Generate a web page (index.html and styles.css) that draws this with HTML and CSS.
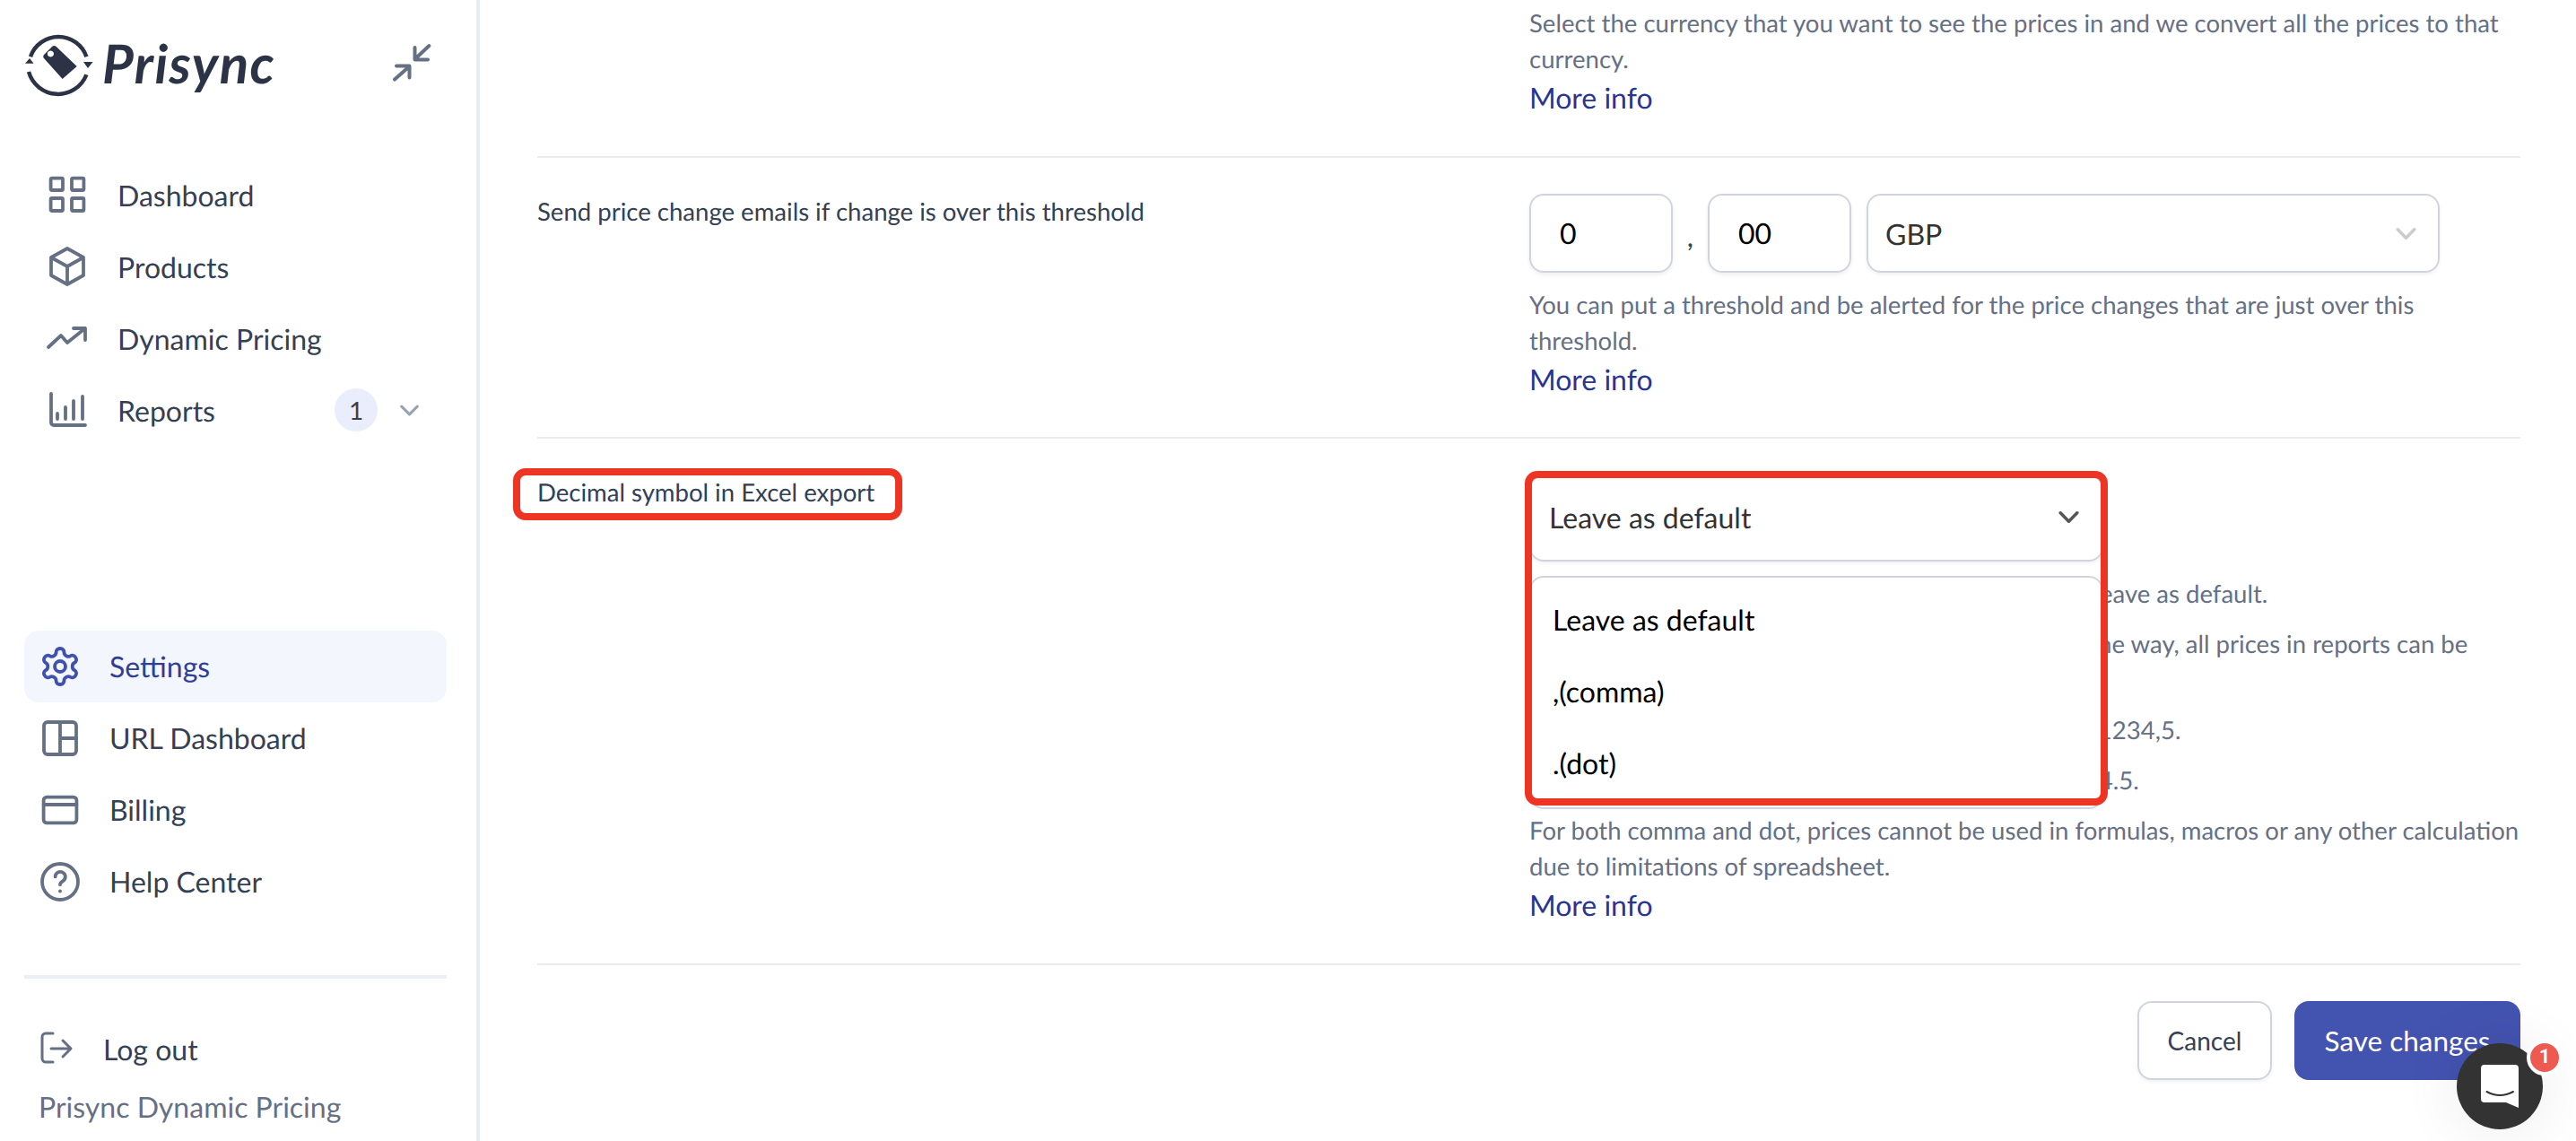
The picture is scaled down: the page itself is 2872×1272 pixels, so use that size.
FILE: index.html
```html
<!DOCTYPE html>
<html lang="en">
<head>
<meta charset="utf-8">
<title>Prisync Settings</title>
<link rel="stylesheet" href="styles.css">
</head>
<body>
<div class="app">
  <aside class="sidebar">
    <div class="brand">
      <svg class="logo-mark" width="80" height="80" viewBox="0 0 80 80">
        <path class="logo-ring" d="M9 33.3A33 33 0 0 1 71.4 33.3"/>
        <path class="logo-ring" d="M71.4 53.3A34 34 0 0 1 7 50"/>
        <path class="logo-solid" d="M68 39H78.5L73 46ZM3 40.7H12.5L8 35Z"/>
        <path class="logo-solid" fill-rule="evenodd" d="M37.5 21.7 60.7 44 44.6 58 24 35c-1-1-1-2.500 0-4l9-9c1-1 3-1.300 4.500-.3ZM31.400 26.400a3.600 3.600 0 1 0 .01 0Z"/>
      </svg>
      <span class="brand-name">Prisync</span>
      <svg class="icon collapse" viewBox="0 0 24 24"><path d="M21.700 2.500 13.750 10M13.750 3.500V10.200H21M2.500 21.300 10.750 14M3.500 13.750H10.750V20.200"/></svg>
    </div>
    <nav class="nav nav-top">
      <a class="nav-item"><svg class="icon" viewBox="0 0 24 24"><rect x="2.800" y="2.800" width="6.700" height="6.700" rx=".6"/><rect x="14.500" y="2.800" width="6.700" height="6.700" rx=".6"/><rect x="2.800" y="14" width="6.700" height="7" rx=".6"/><rect x="14.500" y="14" width="6.700" height="7" rx=".6"/></svg><span>Dashboard</span></a>
      <a class="nav-item"><svg class="icon" viewBox="0 0 24 24"><path d="M12 2 21 7V17L12 22 3 17V7ZM3 7 12 12 21 7M12 12V22"/></svg><span>Products</span></a>
      <a class="nav-item"><svg class="icon" viewBox="0 0 24 24"><path d="M1.500 17 8.500 10.500 12 14.500 22 6.500M15.500 6.500H22V13"/></svg><span>Dynamic Pricing</span></a>
      <a class="nav-item"><svg class="icon" viewBox="0 0 24 24"><path d="M3 3V19a1.500 1.500 0 0 0 1.500 1.500H22M6.500 17V14M11 17V10.500M15.500 17V7M20.500 17V4.500"/></svg><span>Reports</span><b class="count">1</b><svg class="nav-chevron" viewBox="0 0 24 14"><path d="M2 2 12 12 22 2"/></svg></a>
    </nav>
    <nav class="nav nav-bottom">
      <a class="nav-item is-active"><svg class="icon" viewBox="0 0 24 24"><path d="M12.220 2h-.44a2 2 0 0 0-2 2v.18a2 2 0 0 1-1 1.730l-.43.25a2 2 0 0 1-2 0l-.15-.08a2 2 0 0 0-2.730.73l-.22.38a2 2 0 0 0 .73 2.730l.15.1a2 2 0 0 1 1 1.720v.51a2 2 0 0 1-1 1.740l-.15.09a2 2 0 0 0-.73 2.730l.22.38a2 2 0 0 0 2.730.73l.15-.08a2 2 0 0 1 2 0l.43.25a2 2 0 0 1 1 1.730V20a2 2 0 0 0 2 2h.44a2 2 0 0 0 2-2v-.18a2 2 0 0 1 1-1.730l.43-.25a2 2 0 0 1 2 0l.15.08a2 2 0 0 0 2.730-.73l.22-.39a2 2 0 0 0-.73-2.730l-.15-.08a2 2 0 0 1-1-1.740v-.5a2 2 0 0 1 1-1.740l.15-.09a2 2 0 0 0 .73-2.730l-.22-.38a2 2 0 0 0-2.730-.73l-.15.08a2 2 0 0 1-2 0l-.43-.25a2 2 0 0 1-1-1.730V4a2 2 0 0 0-2-2z"/><circle cx="12" cy="12" r="3"/></svg><span>Settings</span></a>
      <a class="nav-item"><svg class="icon" viewBox="0 0 24 24"><rect x="3" y="3" width="18" height="18" rx="2"/><path d="M12 3V21M12 12H21"/></svg><span>URL Dashboard</span></a>
      <a class="nav-item"><svg class="icon" viewBox="0 0 24 24"><rect x="2.800" y="4.800" width="18.400" height="14.400" rx="1.800"/><path d="M2.800 9H21.200"/></svg><span>Billing</span></a>
      <a class="nav-item"><svg class="icon" viewBox="0 0 24 24"><circle cx="12" cy="12" r="10"/><path d="M9.300 9.200a2.800 2.800 0 1 1 4.300 2.400c-.9.6-1.600 1-1.600 2"/><path d="M12 17.200v.1"/></svg><span>Help Center</span></a>
    </nav>
    <div class="side-rule"></div>
    <a class="logout"><svg class="icon thin" viewBox="0 0 24 24"><path d="M10 3.500H6a2 2 0 0 0-2 2V17.500a2 2 0 0 0 2 2H10M9 12H20M15.500 7.500 20 12 15.500 16.500"/></svg><span>Log out</span></a>
    <p class="side-foot">Prisync Dynamic Pricing</p>
  </aside>

  <main class="main">
    <section class="row row-first">
      <div></div>
      <div>
        <p class="hint">Select the currency that you want to see the prices in and we convert all the prices to that currency.</p>
        <a class="more">More info</a>
      </div>
    </section>

    <section class="row row-mid">
      <div class="label">Send price change emails if change is over this threshold</div>
      <div>
        <div class="fields">
          <div class="field">0</div>
          <span class="sep">,</span>
          <div class="field">00</div>
          <div class="picker"><span>GBP</span><svg class="chev chev-muted" viewBox="0 0 24 14"><path d="M2 2 12 12 22 2"/></svg></div>
        </div>
        <p class="hint hint-top">You can put a threshold and be alerted for the price changes that are just over this threshold.</p>
        <a class="more">More info</a>
      </div>
    </section>

    <section class="row">
      <div class="label"><span class="label-mark">Decimal symbol in Excel export<i class="mark mark-label"></i></span></div>
      <div>
        <div class="combo">
          <div class="picker picker-open"><span>Leave as default</span><svg class="chev" viewBox="0 0 24 14"><path d="M2 2 12 12 22 2"/></svg></div>
          <ul class="menu">
            <li>Leave as default</li>
            <li>,(comma)</li>
            <li>.(dot)</li>
          </ul>
          <i class="mark mark-combo"></i>
        </div>
        <div class="hints">
          <p class="hint">If you are not sure which symbol to use here, please leave as default.</p>
          <p class="hint">If you leave as default, prices are formatted in the same way, all prices in reports can be used as numbers in your own spreadsheet.</p>
          <p class="hint">If you select comma, a price in your report is seen as 1234,5.</p>
          <p class="hint">If you select dot, a price in your report is seen as 1234.5.</p>
          <p class="hint">For both comma and dot, prices cannot be used in formulas, macros or any other calculation due to limitations of spreadsheet.</p>
        </div>
        <a class="more">More info</a>
      </div>
    </section>

    <footer class="actions">
      <button class="btn btn-ghost">Cancel</button>
      <button class="btn btn-primary">Save changes</button>
    </footer>
  </main>
</div>

<div class="chat">
  <svg class="chat-icon" viewBox="0 0 42 48"><path class="chat-bubble" d="M4 0H38a4 4 0 0 1 4 4V48L28 42H4a4 4 0 0 1-4-4V4A4 4 0 0 1 4 0Z"/><path class="chat-smile" d="M6.500 30Q21 38 36 30"/></svg>
  <span class="chat-badge">1</span>
</div>
</body>
</html>
```

FILE: styles.css
```css
* { box-sizing: border-box; }
html, body { margin: 0; height: 100%; overflow: hidden; background: #fff; }
body { font-family: Lato, "Liberation Sans", sans-serif; color: #344054; text-rendering: geometricPrecision; }
p, ul { margin: 0; padding: 0; }
.app { display: flex; height: 1272px; }

/* Sidebar */
.sidebar { width: 535px; flex: none; border-right: 4px solid #e9ebf2; padding: 30px 33px 0 27px; display: flex; flex-direction: column; }
.brand { display: flex; align-items: center; height: 80px; margin-left: -2px; }
.logo-mark { flex: none; }
.logo-ring { fill: none; stroke: #2d3346; stroke-width: 4.500; }
.logo-solid { fill: #2d3346; }
.brand-name { font-size: 60px; font-weight: 700; font-style: italic; color: #2d3346; margin-left: 9px; letter-spacing: 1.400px; }
.icon { width: 48px; height: 48px; flex: none; fill: none; stroke: #667085; stroke-width: 1.900; stroke-linecap: round; stroke-linejoin: round; }
.icon.thin { stroke-width: 1.500; }
.collapse { margin-left: auto; margin-right: 15px; stroke-width: 2; }
.nav { display: flex; flex-direction: column; }
.nav-top { margin-top: 67px; }
.nav-top .nav-item { padding-left: 24px; }
.nav-top .nav-item .icon { margin-right: 32px; }
.nav-item { display: flex; align-items: center; height: 80px; font-size: 32px; color: #344054; border-radius: 16px; }
.nav-bottom { margin-top: 206px; }
.nav-bottom .nav-item { padding-left: 16px; }
.nav-bottom .nav-item .icon { margin-right: 31px; }
.nav-bottom span { margin-top: -2px; }
.is-active { background: #f4f6fe; color: #2f3f95; }
.is-active .icon { stroke: #3f51ae; }
.count { width: 48px; height: 48px; margin-left: auto; border-radius: 50%; background: #eaeefc; font-size: 28px; font-weight: 400; display: flex; align-items: center; justify-content: center; }
.nav-chevron { width: 21px; height: 13px; margin: 0 31px 0 25px; fill: none; stroke: #98a2b3; stroke-width: 3.500; stroke-linecap: round; stroke-linejoin: round; }
.side-rule { height: 4px; background: #eceef3; margin-top: 64px; }
.logout { display: flex; align-items: center; height: 48px; margin: 54px 0 0 12px; font-size: 32px; color: #344054; }
.logout .icon { margin-right: 28px; }
.side-foot { margin: 17px 0 0 16px; font-size: 32px; line-height: 48px; color: #667085; }

/* Main */
.main { flex: 1; min-width: 0; padding: 0 62px 0 64px; }
.row { display: grid; grid-template-columns: 1106px 1fr; padding: 40px 0 41px; border-bottom: 2px solid #eaecf0; }
.row-first { padding-top: 6px; }
.row-mid { padding-bottom: 40px; }
.label { font-size: 27.550px; line-height: 40px; color: #344054; }
.label-mark { position: relative; display: inline-block; }
.mark { position: absolute; display: block; border: 8px solid #ee3524; border-radius: 14px; pointer-events: none; }
.mark-label { left: -27px; top: -7px; width: 434px; height: 58px; }
.hint { font-size: 27.550px; line-height: 40px; color: #667085; }
.hint-top { margin-top: 16px; }
.more { display: block; margin-top: -1px; font-size: 32px; line-height: 48px; color: #283593; }
.fields { display: flex; align-items: stretch; height: 88px; }
.field { width: 160px; border: 2px solid #d0d5dd; border-radius: 16px; box-shadow: 0 2px 4px rgba(16,24,40,.08); padding-left: 32px; font-size: 32px; line-height: 84px; color: #000; }
.sep { width: 39px; text-align: center; font-size: 32px; line-height: 94px; }
.picker { display: flex; align-items: center; justify-content: space-between; border: 2px solid #d0d5dd; border-radius: 16px; box-shadow: 0 2px 4px rgba(16,24,40,.06); padding: 0 24px 0 19px; font-size: 32px; color: #333; }
.fields .picker { width: 639px; margin-left: 17px; }
.chev { width: 23px; height: 13px; fill: none; stroke: #555; stroke-width: 3.800; stroke-linecap: round; stroke-linejoin: round; }
.chev-muted { stroke: #ccc; }
.combo { position: relative; width: 640px; height: 97px; }
.picker-open { height: 97px; padding-right: 25px; padding-left: 20px; padding-bottom: 2px; }
.menu { position: absolute; left: 0; top: 113px; width: 640px; height: 260px; padding: 8px 0; list-style: none; background: #fff; border: 2px solid #d0d5dd; border-radius: 16px; }
.menu li { height: 80px; line-height: 77px; padding-left: 24px; font-size: 32px; color: #000; }
.mark-combo { left: -5px; top: -4px; width: 650px; height: 373px; }
.hints { display: flex; flex-direction: column; gap: 16px; margin: 16px 0 -1px; }
.actions { display: flex; justify-content: flex-end; gap: 25px; padding-top: 40px; }
.btn { height: 88px; border-radius: 16px; font-family: inherit; font-size: 28px; }
.btn-ghost { width: 150px; background: #fff; color: #344054; border: 2px solid #d0d5dd; box-shadow: 0 2px 4px rgba(16,24,40,.06); }
.btn-primary { width: 252px; background: #4353b0; color: #fff; border: 0; font-size: 31.500px; }

/* Chat launcher */
.chat { position: fixed; right: 37px; bottom: 13px; width: 96px; height: 96px; border-radius: 50%; background: #333; box-shadow: 0 0 70px rgba(0,0,0,.09); display: flex; align-items: center; justify-content: center; }
.chat-icon { width: 42px; height: 48px; }
.chat-bubble { fill: #fff; }
.chat-smile { fill: none; stroke: #333; stroke-width: 2; stroke-linecap: round; }
.chat-badge { position: absolute; top: -4px; right: -22px; width: 40px; height: 40px; border: 4px solid #fff; border-radius: 50%; background: #ee5a52; color: #fff; font: 700 22px/32px Roboto, sans-serif; text-align: center; }
```
